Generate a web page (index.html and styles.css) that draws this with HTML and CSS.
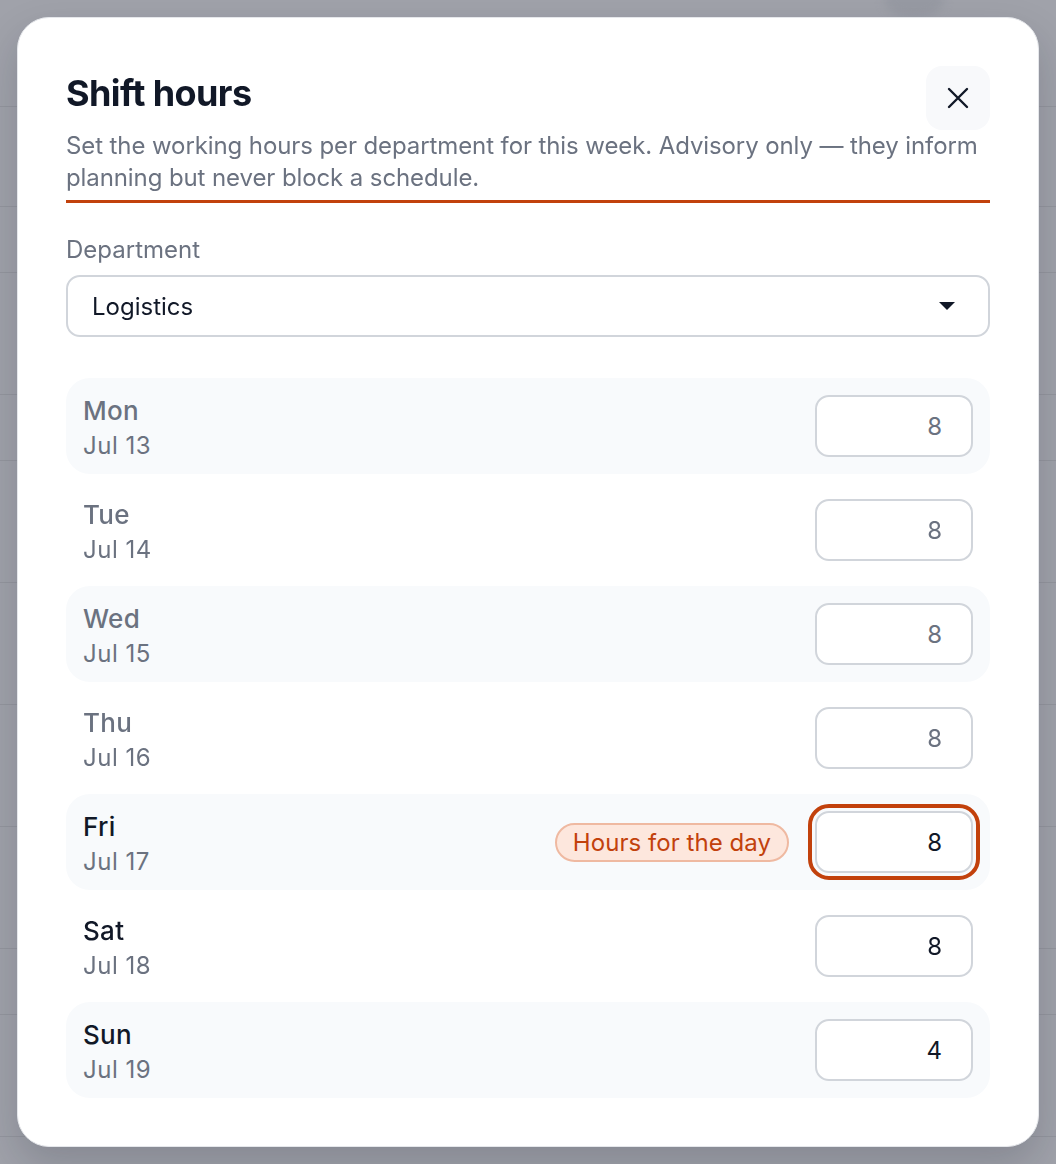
FILE: index.html
```html
<!DOCTYPE html>
<html lang="en">
<head>
  <meta charset="UTF-8">
  <title>Shift hours</title>
  <link rel="stylesheet" href="styles.css">
</head>
<body>

  <!-- page behind the dialog -->
  <div class="page">
    <div class="page-row head"></div>
    <div class="page-row mid"></div>
    <div class="page-row short"></div>
    <div class="page-row tall"></div>
    <div class="page-row short"></div>
    <div class="page-row tall"></div>
    <div class="page-row tall"></div>
    <div class="page-row tall"></div>
    <div class="page-row tall"></div>
    <div class="page-row short"></div>
    <div class="page-row tall"></div>
    <span class="page-avatar"></span>
  </div>

  <div class="overlay">
    <div class="modal" role="dialog" aria-labelledby="modalTitle">
      <div class="modal-head">
        <div class="head-top">
          <h2 id="modalTitle">Shift hours</h2>
          <button class="close" aria-label="Close">
            <svg width="24" height="24" viewBox="0 0 24 24" fill="none" stroke="#111827" stroke-width="2.4" stroke-linecap="round">
              <path d="M3 3L21 21M21 3L3 21"/>
            </svg>
          </button>
        </div>
        <p class="subtitle">Set the working hours per department for this week. Advisory only — they inform planning but never block a schedule.</p>
      </div>

      <div class="field-label">Department</div>
      <div class="select">
        <span>Logistics</span>
        <svg width="18" height="10" viewBox="0 0 18 10"><path d="M1 1H17L9 9Z" fill="#111827"/></svg>
      </div>

      <div class="days">
        <div class="day shade past">
          <div class="day-text"><span class="day-name">Mon</span><span class="day-date">Jul 13</span></div>
          <input class="hours" type="text" value="8">
        </div>
        <div class="day past">
          <div class="day-text"><span class="day-name">Tue</span><span class="day-date">Jul 14</span></div>
          <input class="hours" type="text" value="8">
        </div>
        <div class="day shade past">
          <div class="day-text"><span class="day-name">Wed</span><span class="day-date">Jul 15</span></div>
          <input class="hours" type="text" value="8">
        </div>
        <div class="day past">
          <div class="day-text"><span class="day-name">Thu</span><span class="day-date">Jul 16</span></div>
          <input class="hours" type="text" value="8">
        </div>
        <div class="day shade">
          <div class="day-text"><span class="day-name">Fri</span><span class="day-date">Jul 17</span></div>
          <span class="hint">Hours for the day</span>
          <input class="hours focus" type="text" value="8">
        </div>
        <div class="day">
          <div class="day-text"><span class="day-name">Sat</span><span class="day-date">Jul 18</span></div>
          <input class="hours" type="text" value="8">
        </div>
        <div class="day shade">
          <div class="day-text"><span class="day-name">Sun</span><span class="day-date">Jul 19</span></div>
          <input class="hours" type="text" value="4">
        </div>
      </div>
    </div>
  </div>

</body>
</html>
```

FILE: styles.css
```css
body {
  margin: 0;
  font-family: "Inter", "Noto Sans", sans-serif;
  background: #a0a2aa;
  color: #111827;
}

.page {
  position: relative;
  height: 1164px;
  overflow: hidden;
}

.page-row {
  border-bottom: 1px solid #94969e;
}

.page-row.head { height: 106px; }
.page-row.mid { height: 99px; }
.page-row.short { height: 65px; }
.page-row.tall { height: 121px; }

.page-avatar {
  position: absolute;
  top: -22px;
  left: 884px;
  width: 60px;
  height: 40px;
  border-radius: 50%;
  background: #979aa3;
  filter: blur(4px);
}

.overlay {
  position: fixed;
  inset: 0;
  padding: 17px;
  display: flex;
  align-items: flex-start;
}

.modal {
  flex: 1;
  background: #fff;
  border: 1px solid #e5e7eb;
  border-radius: 32px;
  padding: 48px;
  box-shadow: 0 18px 40px rgba(17, 24, 39, 0.18);
}

.modal-head {
  border-bottom: 3px solid #c2410c;
  padding-bottom: 6px;
}

.head-top {
  display: flex;
  justify-content: space-between;
  align-items: flex-start;
}

h2 {
  margin: 5px 0 0;
  font-size: 36px;
  line-height: 44px;
  font-weight: 700;
  letter-spacing: -0.6px;
}

.close {
  width: 64px;
  height: 64px;
  border: 0;
  border-radius: 16px;
  background: #f8f9fb;
  display: flex;
  align-items: center;
  justify-content: center;
  padding: 0;
}

.subtitle {
  margin: 0;
  font-size: 24px;
  line-height: 32px;
  letter-spacing: -0.1px;
  color: #6b7280;
}

.field-label {
  margin-top: 31px;
  font-size: 24px;
  line-height: 32px;
  color: #6b7280;
}

.select {
  margin-top: 9px;
  height: 62px;
  box-sizing: border-box;
  border: 2px solid #d1d5db;
  border-radius: 14px;
  padding: 0 32px 0 24px;
  display: flex;
  align-items: center;
  justify-content: space-between;
  font-size: 24px;
}

.days {
  margin-top: 41px;
  display: flex;
  flex-direction: column;
  gap: 8px;
}

.day {
  height: 96px;
  box-sizing: border-box;
  padding: 0 17px;
  border-radius: 24px;
  display: flex;
  align-items: center;
}

.day.shade {
  background: #f8fafc;
}

.day-text {
  margin-top: 5px;
  margin-right: auto;
  display: flex;
  flex-direction: column;
  gap: 5px;
}

.day-name {
  font-size: 26px;
  line-height: 30px;
  font-weight: 500;
  letter-spacing: 0.3px;
}

.day-date {
  font-size: 24px;
  line-height: 30px;
  letter-spacing: 0.5px;
  color: #6b7280;
}

.day.past .day-name {
  color: #6b7280;
}

.hours {
  width: 158px;
  height: 62px;
  box-sizing: border-box;
  border: 2px solid #d1d5db;
  border-radius: 14px;
  background: #fff;
  padding: 0 29px 0 20px;
  text-align: right;
  font-family: inherit;
  font-size: 24px;
  color: #111827;
}

.day.past .hours {
  color: #6b7280;
}

.hours.focus {
  outline: 4px solid #c2410c;
  outline-offset: 3px;
}

.hint {
  margin-right: 26px;
  padding: 0 16px;
  border: 2px solid #efb9a1;
  border-radius: 999px;
  background: #fde7dd;
  color: #c2410c;
  font-size: 24px;
  line-height: 35px;
  letter-spacing: 0.05px;
}
```
